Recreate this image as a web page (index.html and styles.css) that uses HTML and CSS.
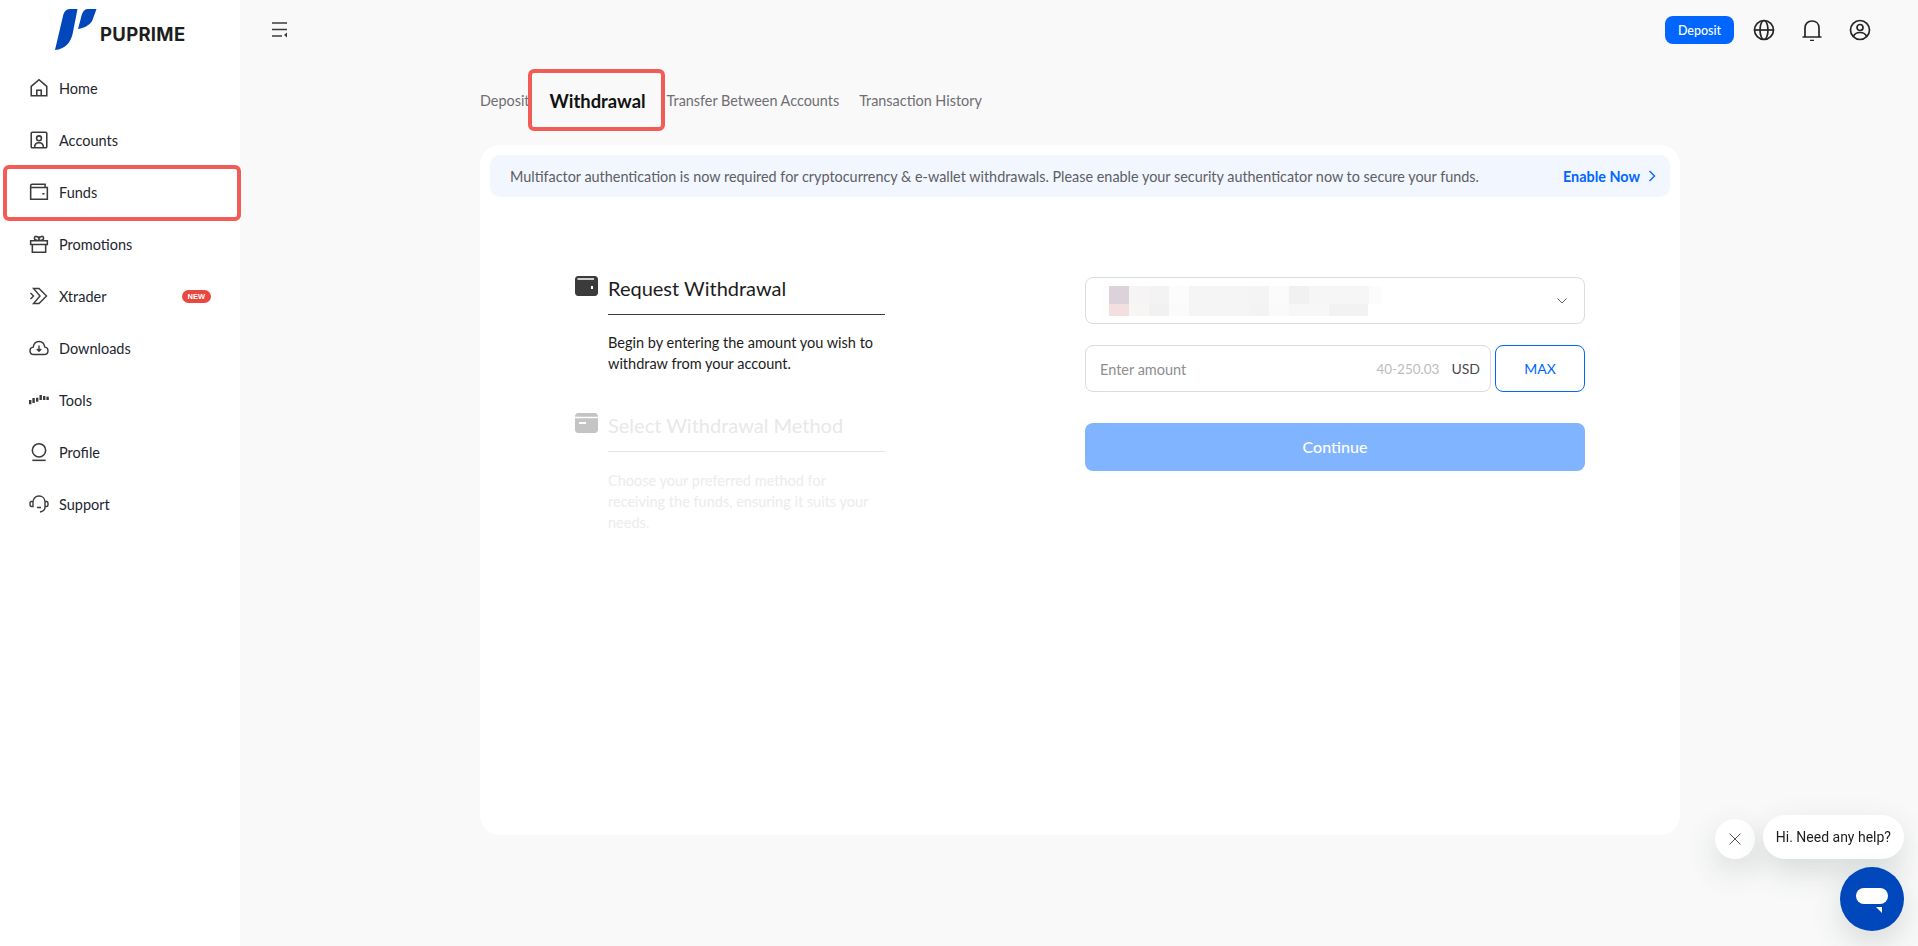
FILE: index.html
```html
<!DOCTYPE html>
<html lang="en">
<head>
    <meta charset="UTF-8">
    <meta name="viewport" content="width=device-width, initial-scale=1.0">
    <title>PU Prime - Withdrawal</title>
    <link rel="stylesheet" href="styles.css">
</head>
<body>
    <div class="layout">
        <aside class="sidebar">
            <div class="logo">
                <svg class="logo-mark" viewBox="0 0 42 42" width="42" height="42">
                    <path d="M8 7C9 3 11 0 15 0H22.500L18 23C16 34 10 40 0 41Z" fill="#0047bb"/>
                    <path d="M33 0H41.500L37.500 11C35.500 15.500 30 19 23 20L27 5C28 2 30 0 33 0Z" fill="#0047bb"/>
                </svg>
                <span class="logo-text">PUPRIME</span>
            </div>
            <nav class="nav">
                <a class="nav-item">
                    <svg class="nav-icon" viewBox="0 0 18 18"><path d="M2 7.500L9 1.500L16 7.500V16H2ZM7 16V11H11V16"/></svg>
                    <span>Home</span>
                </a>
                <a class="nav-item">
                    <svg class="nav-icon" viewBox="0 0 18 18"><rect x="2" y="2" width="14" height="14" rx="1"/><circle cx="9" cy="7.500" r="2.200"/><path d="M5 16C5 12.500 6.500 11.500 9 11.500S13 12.500 13 16"/></svg>
                    <span>Accounts</span>
                </a>
                <a class="nav-item nav-item-marked">
                    <svg class="nav-icon" viewBox="0 0 18 18"><path d="M1.500 5V15.500H16.500V5ZM1.500 5V3.500C1.500 2.500 2 2 3 2H14.500V5M12 10.500H14"/></svg>
                    <span>Funds</span>
                </a>
                <a class="nav-item">
                    <svg class="nav-icon" viewBox="0 0 18 18"><path d="M1.500 6H16.500V9.500H1.500ZM3 9.500V16.500H15V9.500M9 6V2M9 6C5 6 4.500 4.500 5 3S8 2 9 4C10 2 12.500 1.500 13 3S13 6 9 6Z"/></svg>
                    <span>Promotions</span>
                </a>
                <a class="nav-item">
                    <svg class="nav-icon" viewBox="0 0 20 18"><path d="M4.500 1.500H10L17.500 9L10 16.500H4.500L11 9ZM1.500 6L4.500 9L1.500 12"/></svg>
                    <span>Xtrader</span>
                    <span class="nav-badge">NEW</span>
                </a>
                <a class="nav-item">
                    <svg class="nav-icon" viewBox="0 0 20 18"><path d="M5 15.500C2.500 15.500 1 13.800 1 11.700C1 9.800 2.400 8.300 4.200 8.100C4.700 5 7 2.500 10 2.500S15.300 5 15.800 8.100C17.600 8.300 19 9.800 19 11.700C19 13.800 17.500 15.500 15 15.500ZM10 6.500V12M7.800 10L10 12.200L12.200 10"/></svg>
                    <span>Downloads</span>
                </a>
                <a class="nav-item">
                    <svg class="nav-icon nav-icon-fill" viewBox="0 0 20 20"><rect x="0" y="10" width="2.400" height="4.300"/><rect x="3.400" y="8" width="2.400" height="5"/><rect x="7" y="7.700" width="2.400" height="4"/><rect x="10.500" y="5" width="2.400" height="5"/><rect x="14" y="6" width="2.400" height="4"/><rect x="17.400" y="6.700" width="2.400" height="3.300"/></svg>
                    <span>Tools</span>
                </a>
                <a class="nav-item">
                    <svg class="nav-icon" viewBox="0 0 18 18"><circle cx="9" cy="7.500" r="6"/><path d="M3 16.500H15"/></svg>
                    <span>Profile</span>
                </a>
                <a class="nav-item">
                    <svg class="nav-icon" viewBox="0 0 20 18"><path d="M4 7V7C4 3.500 6.500 1 10 1S16 3.500 16 7V12C16 14.500 14 16.500 11 17M4 6.500H2.500C1.500 6.500 1 7.200 1 8V10C1 10.800 1.500 11.500 2.500 11.500H4ZM16 6.500H17.500C18.500 6.500 19 7.200 19 8V10C19 10.800 18.500 11.500 17.500 11.500H16ZM8 12.500H12"/></svg>
                    <span>Support</span>
                </a>
            </nav>
        </aside>

        <div class="main">
            <header class="topbar">
                <svg class="menu-icon" viewBox="0 0 16 16" width="16" height="16"><path d="M0 1H15M0 7.500H15M0 14H10"/><path class="menu-arrow" d="M15 10.500V15.500L12 13Z"/></svg>
                <div class="topbar-right">
                    <button class="deposit-btn">Deposit</button>
                    <svg class="top-icon" viewBox="0 0 22 22"><circle cx="11" cy="11" r="9.500"/><ellipse cx="11" cy="11" rx="4" ry="9.500"/><path d="M1.500 11H20.500"/></svg>
                    <svg class="top-icon" viewBox="0 0 22 22"><path d="M4 18V9C4 4.500 7 2 11 2S18 4.500 18 9V18M1.500 18H20.500M9 21.500H13"/></svg>
                    <svg class="top-icon" viewBox="0 0 22 22"><circle cx="11" cy="11" r="9.500"/><circle cx="11" cy="8.500" r="3"/><path d="M4.500 17.500C5.500 14.500 8 13.500 11 13.500S16.500 14.500 17.500 17.500"/></svg>
                </div>
            </header>

            <div class="content">
                <div class="tabs">
                    <a class="tab">Deposit</a>
                    <a class="tab tab-active">Withdrawal</a>
                    <a class="tab">Transfer Between Accounts</a>
                    <a class="tab">Transaction History</a>
                </div>

                <section class="card">
                    <div class="notice">
                        <p>Multifactor authentication is now required for cryptocurrency &amp; e-wallet withdrawals. Please enable your security authenticator now to secure your funds.</p>
                        <a class="notice-link">Enable Now
                            <svg viewBox="0 0 8 12" width="8" height="12"><path d="M1.500 1L6.500 6L1.500 11"/></svg>
                        </a>
                    </div>

                    <div class="form-wrap">
                        <div class="steps">
                            <div class="step">
                                <svg class="step-icon" viewBox="0 0 23 20" width="23" height="20"><path d="M3 0H20C21.500 0 23 1.500 23 3V17C23 18.500 21.500 20 20 20H3C1.500 20 0 18.500 0 17V3C0 1.500 1.500 0 3 0Z" fill="#3b3b3b"/><path d="M2.500 3H19" stroke="#fff" stroke-width="1.500"/><rect x="16" y="10" width="2" height="3" fill="#fff"/></svg>
                                <div class="step-body">
                                    <h3>Request Withdrawal</h3>
                                    <p>Begin by entering the amount you wish to withdraw from your account.</p>
                                </div>
                            </div>
                            <div class="step step-off">
                                <svg class="step-icon" viewBox="0 0 23 20" width="23" height="20"><path d="M3 0H20C21.500 0 23 1.500 23 3V17C23 18.500 21.500 20 20 20H3C1.500 20 0 18.500 0 17V3C0 1.500 1.500 0 3 0Z" fill="#c4c4c4"/><path d="M0 4.500H23" stroke="#fff" stroke-width="1.500"/><rect x="4" y="9" width="7" height="2" fill="#fff"/></svg>
                                <div class="step-body">
                                    <h3>Select Withdrawal Method</h3>
                                    <p>Choose your preferred method for receiving the funds, ensuring it suits your needs.</p>
                                </div>
                            </div>
                        </div>

                        <div class="fields">
                            <div class="select-box">
                                <div class="blur-text">
                                    <div class="blur-row blur-top"></div>
                                    <div class="blur-row blur-bottom"></div>
                                </div>
                                <svg class="select-arrow" viewBox="0 0 10 6" width="10" height="6"><path d="M0.500 0.500L5 5L9.500 0.500"/></svg>
                            </div>
                            <div class="amount-row">
                                <div class="amount-box">
                                    <span class="amount-label">Enter amount</span>
                                    <span class="amount-range">40-250.03</span>
                                    <span class="amount-cur">USD</span>
                                </div>
                                <button class="max-btn">MAX</button>
                            </div>
                            <button class="continue-btn">Continue</button>
                        </div>
                    </div>
                </section>
            </div>
        </div>
    </div>

    <div class="chat">
        <div class="chat-top">
            <button class="chat-close">
                <svg viewBox="0 0 12 12" width="12" height="12"><path d="M0.500 0.500L11.500 11.500M11.500 0.500L0.500 11.500"/></svg>
            </button>
            <div class="chat-bubble">Hi. Need any help?</div>
        </div>
        <div class="chat-launcher">
            <svg viewBox="0 0 32 28" width="32" height="28"><rect x="0" y="0" width="32" height="16" rx="8" fill="#fff"/><path d="M20 19H26V25Z" fill="#fff"/></svg>
        </div>
    </div>
</body>
</html>
```

FILE: styles.css
```css
* {
    box-sizing: border-box;
}

body {
    margin: 0;
    font-family: 'Lato', 'Noto Sans', sans-serif;
    font-size: 14px;
    background-color: #f9f9f9;
    color: #1c1c1c;
}

.layout {
    display: flex;
    min-height: 946px;
}

/* Sidebar */
.sidebar {
    width: 240px;
    flex-shrink: 0;
    background-color: #fff;
}

.logo {
    display: flex;
    align-items: center;
    gap: 3px;
    height: 62px;
    padding: 0 0 2px 55px;
}

.logo-text {
    font-family: 'Inter', sans-serif;
    font-size: 18.500px;
    font-weight: 700;
    letter-spacing: 0.3px;
    color: #1e1e1e;
    margin-top: 8px;
}

.nav {
    display: flex;
    flex-direction: column;
}

.nav-item {
    display: flex;
    align-items: center;
    height: 52px;
    padding: 0 29px;
    position: relative;
    color: #23262f;
    font-size: 14.500px;
}

.nav-item-marked::after {
    content: '';
    position: absolute;
    left: 3px;
    right: -1px;
    top: -1px;
    bottom: -3px;
    border: 4px solid #f25c57;
    border-radius: 6px;
}

.nav-icon {
    width: 20px;
    height: 20px;
    margin-right: 10px;
    fill: none;
    stroke: #3b3b3b;
    stroke-width: 1.400;
}

.nav-icon-fill {
    fill: #3b3b3b;
    stroke: none;
}

.nav-badge {
    margin-left: auto;
    padding: 0 6px;
    height: 13px;
    line-height: 13px;
    border-radius: 7px;
    background-color: #e8483f;
    color: #fff;
    font-family: 'Liberation Sans', sans-serif;
    font-size: 7.500px;
    font-weight: 700;
}

/* Top bar */
.main {
    flex: 1;
    min-width: 0;
}

.topbar {
    display: flex;
    align-items: center;
    justify-content: space-between;
    height: 60px;
    padding: 0 47px 0 32px;
}

.menu-icon {
    fill: none;
    stroke: #3b3b3b;
    stroke-width: 1.700;
}

.menu-arrow {
    fill: #3b3b3b;
    stroke: none;
}

.topbar-right {
    display: flex;
    align-items: center;
    gap: 26px;
}

.deposit-btn {
    width: 69px;
    height: 28px;
    margin-right: -7px;
    border: none;
    border-radius: 8px;
    background-color: #0066ff;
    color: #fff;
    font-family: 'Lato', sans-serif;
    font-size: 12.500px;
    font-weight: 500;
}

.top-icon {
    width: 22px;
    height: 22px;
    fill: none;
    stroke: #262626;
    stroke-width: 1.700;
}

/* Content */
.content {
    width: 1200px;
    margin-left: 240px;
}

.tabs {
    display: flex;
    align-items: center;
    height: 85px;
    padding-bottom: 4px;
}

.tab {
    color: #6e6e73;
    font-size: 14.400px;
    margin-right: 20px;
}

.tab-active {
    position: relative;
    margin-right: 21px;
    color: #111;
    font-size: 18.400px;
    font-weight: 700;
}

.tab-active::after {
    content: '';
    position: absolute;
    left: -22px;
    right: -19px;
    top: -21px;
    bottom: -19px;
    border: 4px solid #f25c57;
    border-radius: 6px;
}

.card {
    height: 690px;
    padding: 10px;
    background-color: #fff;
    border-radius: 20px;
}

.notice {
    display: flex;
    align-items: center;
    justify-content: space-between;
    height: 42px;
    padding: 0 14px 0 20px;
    background-color: #f2f6fe;
    border-radius: 10px;
    color: #5e5e63;
    font-size: 14.400px;
}

.notice p {
    margin: 0;
}

.notice-link {
    display: flex;
    align-items: center;
    gap: 8px;
    color: #0066ff;
    font-weight: 700;
}

.notice-link svg {
    fill: none;
    stroke: #0066ff;
    stroke-width: 1.400;
}

/* Steps */
.form-wrap {
    display: flex;
    padding: 78px 0 0 85px;
}

.steps {
    width: 310px;
    margin-right: 200px;
}

.step {
    display: flex;
    gap: 10px;
    margin-bottom: 38px;
}

.step-icon {
    flex-shrink: 0;
    margin-top: 1px;
}

.step-body {
    width: 277px;
}

.step h3 {
    margin: 0;
    padding-bottom: 13px;
    border-bottom: 1px solid #3b3b3b;
    font-size: 20px;
    line-height: 26px;
    font-weight: 400;
    color: #1c1c1c;
}

.step p {
    margin: 17px 0 0;
    font-size: 14.500px;
    line-height: 21px;
    color: #1c1c1c;
}

.step-off h3 {
    color: #e8e8e8;
    border-bottom-color: #e2e2e2;
}

.step-off p {
    margin-top: 18px;
    color: #ececec;
}

/* Form */
.fields {
    width: 500px;
    padding-top: 2px;
}

.select-box {
    display: flex;
    align-items: center;
    justify-content: space-between;
    height: 47px;
    padding: 0 17px 0 16px;
    border: 1px solid #dcdcdc;
    border-radius: 8px;
}

.blur-text {
    width: 280px;
}

.blur-row {
    height: 18px;
    background: linear-gradient(90deg, #fdfdfd 0 7px, #dcd2da 7px 27px, #f7f4f5 27px 47px, #f3f3f3 47px 67px, #fcfcfc 67px 87px, #f5f5f5 87px 147px, #f4f4f4 147px 167px, #fbfbfb 167px 187px, #f1f1f1 187px 207px, #f6f6f6 207px 267px, #fcfcfc 267px 280px);
}

.blur-bottom {
    height: 12px;
    width: 266px;
    background: linear-gradient(90deg, #fdfdfd 0 7px, #f3dfdf 7px 27px, #f8f5f5 27px 47px, #f1f1f1 47px 67px, #fbfbfb 67px 87px, #f5f5f5 87px 147px, #f3f3f3 147px 167px, #fafafa 167px 187px, #f7f7f7 187px 227px, #f2f2f2 227px 266px);
}

.select-arrow {
    fill: none;
    stroke: #5e5e63;
    stroke-width: 1;
}

.amount-row {
    display: flex;
    gap: 4px;
    margin-top: 21px;
}

.amount-box {
    flex: 1;
    display: flex;
    align-items: center;
    height: 47px;
    padding: 0 10px 0 14px;
    border: 1px solid #dcdcdc;
    border-radius: 8px;
}

.amount-label {
    flex: 1;
    color: #8e8e8e;
    font-size: 14.500px;
    margin-top: 2px;
}

.amount-range {
    color: #bcbcc0;
    font-size: 13.500px;
}

.amount-cur {
    margin-left: 12px;
    color: #4a4a4a;
    font-size: 14px;
}

.max-btn {
    width: 90px;
    height: 47px;
    border: 1px solid #0066ff;
    border-radius: 8px;
    background-color: #fff;
    color: #0066ff;
    font-family: 'Lato', sans-serif;
    font-size: 14px;
}

.continue-btn {
    width: 100%;
    height: 48px;
    margin-top: 31px;
    padding-bottom: 3px;
    border: none;
    border-radius: 8px;
    background-color: #80b4ff;
    color: #fff;
    font-family: 'Lato', sans-serif;
    font-size: 16px;
    font-weight: 500;
}

/* Chat widget */
.chat {
    position: fixed;
    right: 14px;
    bottom: 15px;
    display: flex;
    flex-direction: column;
    align-items: flex-end;
    gap: 8px;
}

.chat-top {
    display: flex;
    align-items: flex-end;
    gap: 8px;
}

.chat-close {
    display: flex;
    align-items: center;
    justify-content: center;
    width: 40px;
    height: 40px;
    padding: 0;
    border: none;
    border-radius: 50%;
    background-color: #fff;
    box-shadow: 0 12px 32px rgba(40, 60, 60, 0.16);
}

.chat-close svg {
    fill: none;
    stroke: #555;
    stroke-width: 1;
}

.chat-bubble {
    height: 44px;
    line-height: 44px;
    padding: 0 13px;
    border-radius: 22px;
    background-color: #fff;
    font-family: 'Roboto', sans-serif;
    font-size: 14px;
    color: #1c1c1c;
    box-shadow: 0 12px 32px rgba(40, 60, 60, 0.16);
}

.chat-launcher {
    display: flex;
    align-items: center;
    justify-content: center;
    width: 64px;
    height: 64px;
    padding-top: 6px;
    border-radius: 50%;
    background-color: #0047bb;
    box-shadow: 0 12px 32px rgba(40, 60, 60, 0.16);
}
```
